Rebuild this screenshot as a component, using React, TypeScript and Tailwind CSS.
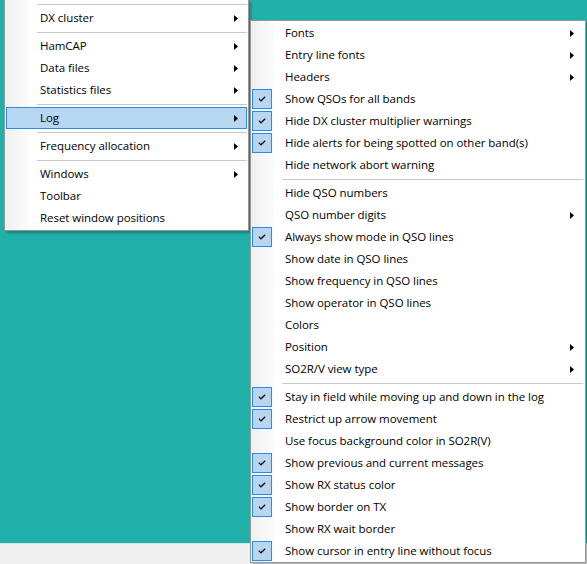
import React from "react";

type Item = { label?: string; arrow?: boolean; checked?: boolean; sep?: boolean; active?: boolean };

const Check = () => (
  <svg width="8" height="6" viewBox="0 0 8 6" className="block">
    <path d="M0.9 2.7 L3 4.8 L7.2 0.7" fill="none" stroke="#000" strokeWidth="1.2" />
  </svg>
);

const Arrow = () => (
  <svg width="4" height="7" viewBox="0 0 4 7" className="block">
    <path d="M0 0 L4 3.5 L0 7 Z" fill="#000" />
  </svg>
);

const leftItems: Item[] = [
  { sep: true },
  { label: "DX cluster", arrow: true },
  { sep: true },
  { label: "HamCAP", arrow: true },
  { label: "Data files", arrow: true },
  { label: "Statistics files", arrow: true },
  { sep: true },
  { label: "Log", arrow: true, active: true },
  { sep: true },
  { label: "Frequency allocation", arrow: true },
  { sep: true },
  { label: "Windows", arrow: true },
  { label: "Toolbar" },
  { label: "Reset window positions" },
];

const rightItems: Item[] = [
  { label: "Fonts", arrow: true },
  { label: "Entry line fonts", arrow: true },
  { label: "Headers", arrow: true },
  { label: "Show QSOs for all bands", checked: true },
  { label: "Hide DX cluster multiplier warnings", checked: true },
  { label: "Hide alerts for being spotted on other band(s)", checked: true },
  { label: "Hide network abort warning" },
  { sep: true },
  { label: "Hide QSO numbers" },
  { label: "QSO number digits", arrow: true },
  { label: "Always show mode in QSO lines", checked: true },
  { label: "Show date in QSO lines" },
  { label: "Show frequency in QSO lines" },
  { label: "Show operator in QSO lines" },
  { label: "Colors" },
  { label: "Position", arrow: true },
  { label: "SO2R/V view type", arrow: true },
  { sep: true },
  { label: "Stay in field while moving up and down in the log", checked: true },
  { label: "Restrict up arrow movement", checked: true },
  { label: "Use focus background color in SO2R(V)" },
  { label: "Show previous and current messages", checked: true },
  { label: "Show RX status color", checked: true },
  { label: "Show border on TX", checked: true },
  { label: "Show RX wait border" },
  { label: "Show cursor in entry line without focus", checked: true },
];

function LeftMenu() {
  return (
    <div className="absolute left-[4px] top-0 w-[245px] border-x border-b border-[#979797] bg-[linear-gradient(to_right,#f0f0f0_0px,#fafafa_22px,#ffffff_24px)] pt-[1px] pb-[1px] shadow-[2px_2px_3px_rgba(0,0,0,0.3)]">
      {leftItems.map((it, i) =>
        it.sep ? (
          <div key={i} className="h-[6px] flex items-center pl-[32px] pr-[1px]">
            <div className="h-px w-full bg-[#c9c9c9]" />
          </div>
        ) : (
          <div
            key={i}
            className={
              "mx-[1px] h-[22px] flex items-center border pl-[33px] " +
              (it.active ? "border-[#2b8ce3] bg-[#b6d6f2]" : "border-transparent")
            }
          >
            <span className="whitespace-nowrap">{it.label}</span>
            {it.arrow && (
              <span className="ml-auto mr-[8px]">
                <Arrow />
              </span>
            )}
          </div>
        )
      )}
    </div>
  );
}

function RightMenu() {
  return (
    <div className="absolute left-[250px] top-[20px] w-[336px] border border-[#979797] bg-[linear-gradient(to_right,#f0f0f0_0px,#fafafa_22px,#ffffff_24px)] pt-[1px] shadow-[2px_2px_3px_rgba(0,0,0,0.3)]">
      {rightItems.map((it, i) =>
        it.sep ? (
          <div key={i} className="h-[6px] flex items-center pl-[31px] pr-[2px]">
            <div className="h-px w-full bg-[#c9c9c9]" />
          </div>
        ) : (
          <div key={i} className="h-[22px] flex items-center">
            <div className="w-[34px] h-[22px] flex items-center pl-[1px] shrink-0">
              {it.checked && (
                <div className="w-[20px] h-[20px] border border-[#2b8ce3] bg-[#b6d6f2] flex items-center justify-center">
                  <Check />
                </div>
              )}
            </div>
            <span className="whitespace-nowrap">{it.label}</span>
            {it.arrow && (
              <span className="ml-auto mr-[11px]">
                <Arrow />
              </span>
            )}
          </div>
        )
      )}
    </div>
  );
}

export default function App() {
  return (
    <div className="relative w-[587px] h-[564px] overflow-hidden flex flex-col font-['Segoe_UI','Open_Sans',sans-serif] text-[11.5px] tracking-[-0.05px] text-black">
      <div className="flex-1 bg-[#20b2aa]" />
      <div className="h-[21px] bg-[#f0f0f0] border-t border-[#e2e2e2]" />
      <LeftMenu />
      <RightMenu />
    </div>
  );
}
